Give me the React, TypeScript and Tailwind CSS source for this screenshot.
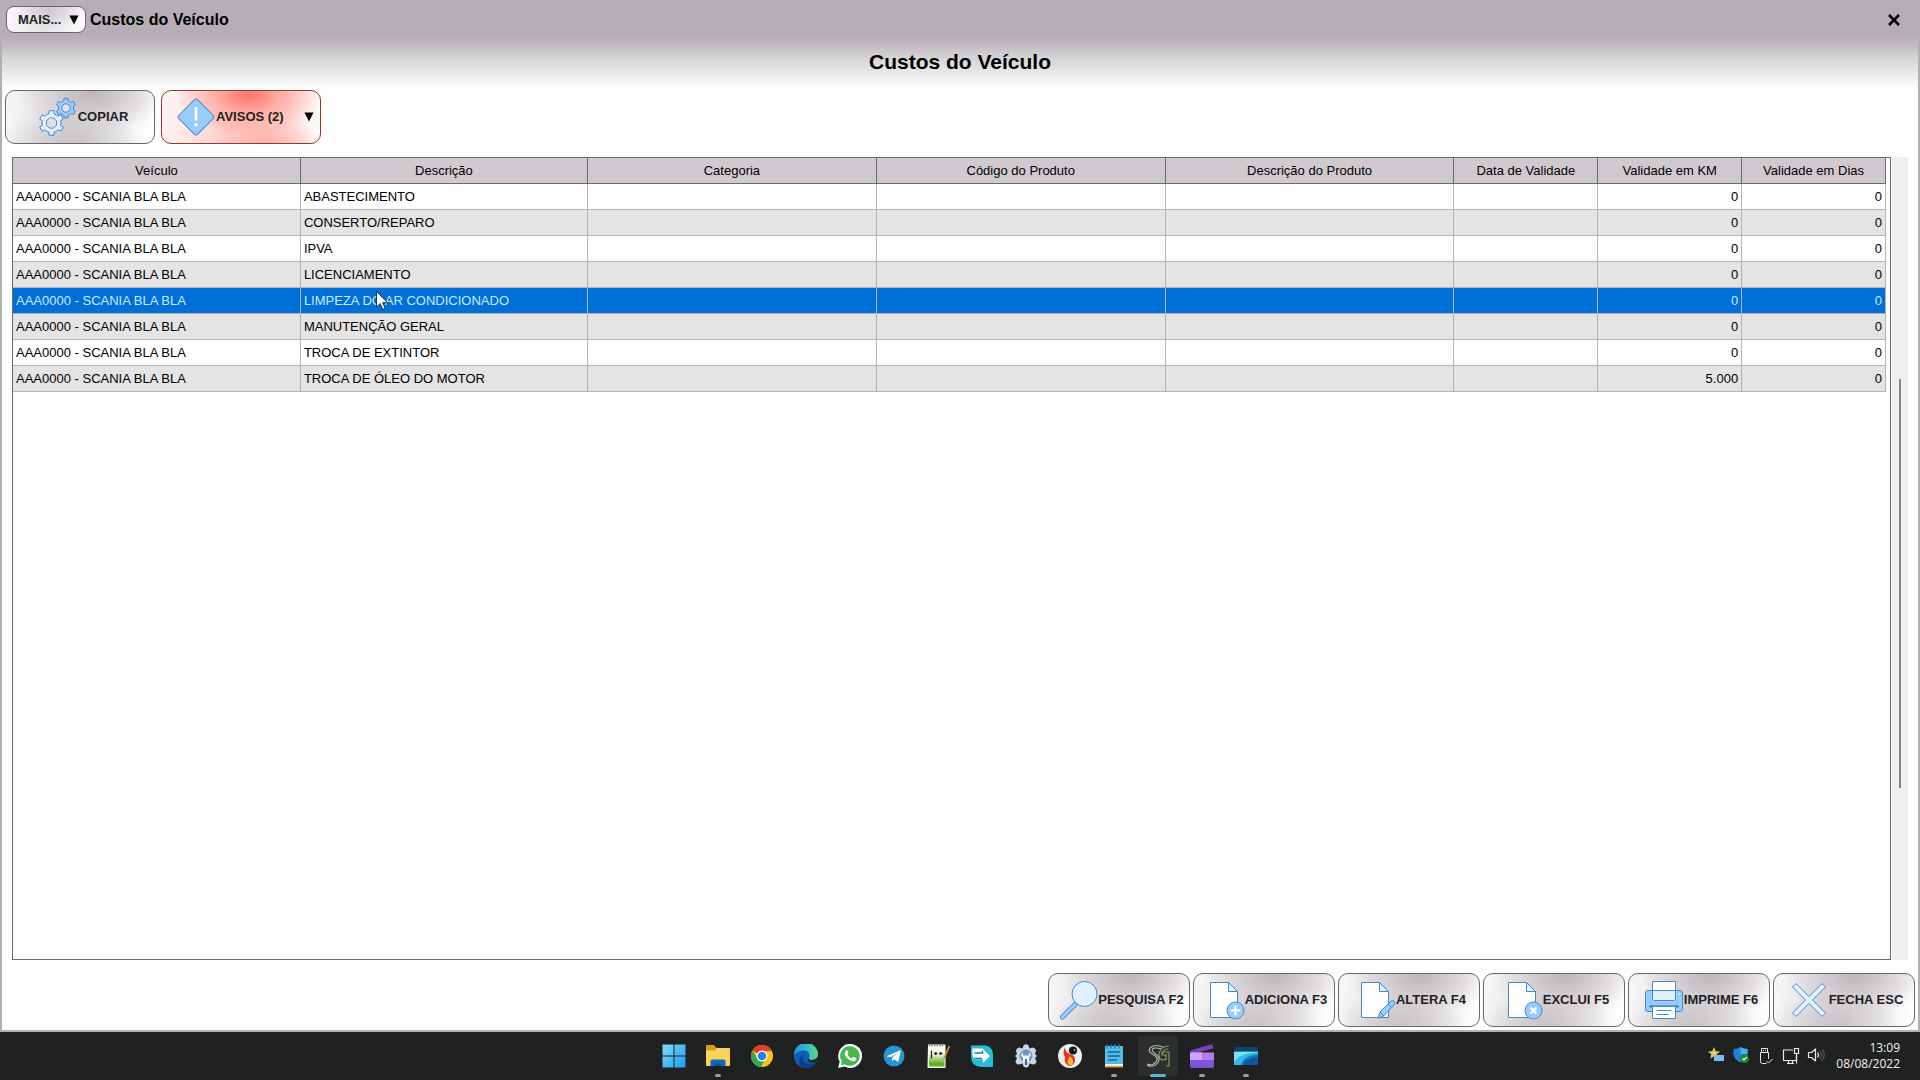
import { useState } from 'react';
import type { ReactNode } from 'react';

const columns = [
  { label: 'Veículo', width: 'w-[15.37%]' },
  { label: 'Descrição', width: 'w-[15.33%]' },
  { label: 'Categoria', width: 'w-[15.42%]' },
  { label: 'Código do Produto', width: 'w-[15.42%]' },
  { label: 'Descrição do Produto', width: 'w-[15.42%]' },
  { label: 'Data de Validade', width: 'w-[7.68%]' },
  { label: 'Validade em KM', width: 'w-[7.68%]' },
  { label: 'Validade em Dias', width: 'w-[7.68%]' },
];

const veiculo = 'AAA0000 - SCANIA BLA BLA';

const rows = [
  { descricao: 'ABASTECIMENTO', km: '0', dias: '0' },
  { descricao: 'CONSERTO/REPARO', km: '0', dias: '0' },
  { descricao: 'IPVA', km: '0', dias: '0' },
  { descricao: 'LICENCIAMENTO', km: '0', dias: '0' },
  { descricao: 'LIMPEZA DO AR CONDICIONADO', km: '0', dias: '0' },
  { descricao: 'MANUTENÇÃO GERAL', km: '0', dias: '0' },
  { descricao: 'TROCA DE EXTINTOR', km: '0', dias: '0' },
  { descricao: 'TROCA DE ÓLEO DO MOTOR', km: '5.000', dias: '0' },
];

const line = '#4788c7';

function Gear({ cx, cy, r, fill }: { cx: number; cy: number; r: number; fill: string }) {
  // six flat teeth around a ring
  const pts: string[] = [];
  for (let i = 0; i < 6; i++) {
    const a = (i * 60 * Math.PI) / 180;
    const at = (radius: number, off: number) =>
      `${(cx + radius * Math.sin(a + off)).toFixed(2)},${(cy - radius * Math.cos(a + off)).toFixed(2)}`;
    pts.push(at(r * 0.76, -0.27), at(r, -0.2), at(r, 0.2), at(r * 0.76, 0.27), at(r * 0.76, 0.52));
  }
  return (
    <>
      <polygon points={pts.join(' ')} fill={fill} stroke={line} strokeLinejoin="round" />
      <circle cx={cx} cy={cy} r={r * 0.42} fill="#e4e1e4" stroke={line} />
    </>
  );
}

function Svg({ children }: { children: ReactNode }) {
  return (
    <svg viewBox="0 0 40 40" className="size-10 shrink-0" fill="none" aria-hidden="true">
      {children}
    </svg>
  );
}

const GearsIcon = () => (
  <Svg>
    <Gear cx={28} cy={11} r={10} fill="#98ccfd" />
    <Gear cx={13.5} cy={26} r={12.5} fill="#dff0fe" />
  </Svg>
);

const WarningIcon = () => (
  <Svg>
    <rect x="6.7" y="6.7" width="26.6" height="26.6" rx="2.5" transform="rotate(45 20 20)" fill="#98ccfd" stroke={line} />
    <path d="M20 10v13.5" stroke="#fff" strokeWidth="2.6" />
    <circle cx="20" cy="27.8" r="1.8" fill="#fff" />
  </Svg>
);

const SearchIcon = () => (
  <Svg>
    <path d="M17 24.5 4.5 37" stroke={line} strokeWidth="5" strokeLinecap="round" />
    <path d="M17 24.5 4.5 37" stroke="#98ccfd" strokeWidth="3.2" strokeLinecap="round" />
    <circle cx="26.5" cy="14" r="12.5" fill="#dff0fe" stroke={line} />
  </Svg>
);

const Page = () => (
  <>
    <path d="M5.500 2.500h18l9 9v26h-27z" fill="#fff" stroke={line} />
    <path d="M23.500 2.500v9h9z" fill="#dff0fe" stroke={line} />
  </>
);

const AddIcon = () => (
  <Svg>
    <Page />
    <circle cx="30.500" cy="30.500" r="8.500" fill="#98ccfd" stroke={line} />
    <path d="M30.500 25.500v10M25.500 30.500h10" stroke="#fff" strokeWidth="2" />
  </Svg>
);

const EditIcon = () => (
  <Svg>
    <Page />
    <path d="m22 38.500 2-6.500 10.500-10.500q2-1.500 3.500 0t0 3.500L27.500 36z" fill="#98ccfd" stroke={line} strokeLinejoin="round" />
    <path d="m24 32 3.500 4M32 24l3.500 3.500" stroke={line} />
  </Svg>
);

const DeleteIcon = () => (
  <Svg>
    <Page />
    <circle cx="30.500" cy="30.500" r="8.500" fill="#98ccfd" stroke={line} />
    <path d="m27.500 27.500 6 6m0-6-6 6" stroke="#fff" strokeWidth="2.200" />
  </Svg>
);

const PrintIcon = () => (
  <Svg>
    <path d="M4 10.500h32q2.500 0 2.500 2.500v16q0 2.500-2.500 2.500H4q-2.500 0-2.500-2.500V13q0-2.500 2.500-2.500z" fill="#98ccfd" stroke={line} />
    <path d="M8.500 1.500h23v17q0 2-2 2h-19q-2 0-2-2z" fill="#fff" stroke={line} />
    <path d="M9 10.500h22v8q0 1.500-1.500 1.500h-19Q9 20 9 18.500z" fill="#dff0fe" />
    <path d="M8.500 10.500h23" stroke={line} />
    <path d="M6.500 26.500h27" stroke={line} strokeWidth="2.500" strokeLinecap="round" />
    <path d="M8.500 26.500h23v12h-23z" fill="#fff" stroke={line} />
    <path d="M12.500 30.500h15M12.500 34.500h12" stroke={line} />
    <path d="M35 14h1" stroke="#fff" strokeWidth="1.500" />
  </Svg>
);

const CloseIcon = () => (
  <Svg>
    <path
      d="m7 3.500 13 13 13-13 3.500 3.500-13 13 13 13-3.500 3.500-13-13-13 13L3.500 33l13-13-13-13z"
      fill="#dff0fe"
      stroke={line}
      strokeLinejoin="round"
    />
  </Svg>
);

const silver =
  'border-[#6a6568] bg-[radial-gradient(ellipse_50%_80%_at_58%_4%,#beb6bb_0%,#d0cacebb_50%,transparent_100%),radial-gradient(ellipse_45%_65%_at_45%_96%,#c9c5c8_0%,transparent_100%),linear-gradient(100deg,#f6f5f6_5%,#d9d6d8_45%,#eeecee_75%,#fdfdfd_95%)]';
const red =
  'border-[#93392c] bg-[radial-gradient(ellipse_45%_80%_at_55%_8%,#ff7468_0%,#ff9f96bb_45%,transparent_100%),radial-gradient(ellipse_35%_60%_at_65%_100%,#ffb0a8_0%,transparent_100%),linear-gradient(100deg,#fdf3f2_5%,#ffd0cb_45%,#fbdfdc_75%,#fdf9f9_95%)]';

const actions = [
  { label: 'PESQUISA F2', icon: <SearchIcon /> },
  { label: 'ADICIONA F3', icon: <AddIcon /> },
  { label: 'ALTERA F4', icon: <EditIcon /> },
  { label: 'EXCLUI F5', icon: <DeleteIcon /> },
  { label: 'IMPRIME F6', icon: <PrintIcon /> },
  { label: 'FECHA ESC', icon: <CloseIcon /> },
];

function Triangle() {
  return (
    <svg viewBox="0 0 10 10" className="size-[10px] shrink-0" aria-hidden="true">
      <path d="M.5.500h9L5 9.500z" fill="#000" />
    </svg>
  );
}

const taskbarApps: { name: string; open?: boolean; active?: boolean; art: ReactNode }[] = [
  {
    name: 'Iniciar',
    art: (
      <>
        <defs>
          <linearGradient id="win" x1="0" y1="0" x2="1" y2="1">
            <stop offset="0" stopColor="#7fdcfc" />
            <stop offset="1" stopColor="#1a9af0" />
          </linearGradient>
        </defs>
        <path d="M.5.500h11v11H.5zM12.500.500h11v11h-11zM.5 12.500h11v11H.5zM12.500 12.500h11v11h-11z" fill="url(#win)" />
      </>
    ),
  },
  {
    name: 'Explorador de Arquivos',
    open: true,
    art: (
      <>
        <path d="M0 2q0-1 1-1h7l2.500 3H23q1 0 1 1v5H0z" fill="#d99a1c" />
        <path d="M0 6.500h8.500L11 4h12q1 0 1 1v16q0 1-1 1H1q-1 0-1-1z" fill="#fcd35a" />
        <path d="M4.500 22v-5q0-1.500 1.500-1.500h12q1.500 0 1.500 1.500v5z" fill="#1668b8" />
        <path d="M9 22v-2.500h6V22z" fill="#0f4d92" />
      </>
    ),
  },
  {
    name: 'Google Chrome',
    art: (
      <>
        <circle cx="12" cy="12" r="11" fill="#fbc116" />
        <path d="M12 12 2.500 6.500a11 11 0 0 1 19 0L21.800 7H12z" fill="#e33b2e" />
        <path d="M2.500 6.500a11 11 0 0 0 8.500 16.500l4.500-8.500L12 12 7.500 14.500z" fill="#2da94f" />
        <circle cx="12" cy="12" r="5.500" fill="#fff" />
        <circle cx="12" cy="12" r="4.300" fill="#2f7cf0" />
      </>
    ),
  },
  {
    name: 'Microsoft Edge',
    art: (
      <>
        <defs>
          <linearGradient id="edge" x1="0" y1="0" x2="1" y2="0">
            <stop offset="0" stopColor="#1d8fe0" />
            <stop offset=".6" stopColor="#37c0c8" />
            <stop offset="1" stopColor="#5cd96a" />
          </linearGradient>
        </defs>
        <circle cx="12" cy="12" r="12" fill="#0f5fb5" />
        <path d="M0 11.500A12 12 0 0 1 24 10c0 4-3 6-6.500 6-2 0-3.500-1-2.500-2.500 2-4-1-7-5-7C5 6.500 1.500 9 0 11.500z" fill="url(#edge)" />
        <path d="M8.500 13c0 6 6 9 13.500 5-3 6-10 7.500-14.500 4.500-4-4-3-11 3-12-1.500 1-2 1.500-2 2.500z" fill="#0b3f8c" />
        <path d="M15 13.500c-.5 1.500.5 2.500 2.500 2.500 3 0 5.500-1.500 6.500-4 0 3-1 5-2 6-5 2-11-1-7-4.500z" fill="#202322" />
      </>
    ),
  },
  {
    name: 'WhatsApp',
    art: (
      <>
        <path d="M0 24l1.700-6.200A12 12 0 1 1 6.500 22.500z" fill="#fff" />
        <path d="M2.800 21.200l1-3.800a9.800 9.800 0 1 1 3.200 3z" fill="#45b854" />
        <path
          d="M8 6.500c.5-.4 1.300-.4 1.600.2l.9 2.100c.1.500-.8 1.400-1 1.700.8 1.900 2.400 3.300 4.300 4l1.300-1.500c.3-.2.6-.1.900 0l2 1c.6.300.2 1.900-.6 2.500-1.300 1-3.300.8-5.300-.2-2.800-1.400-4.800-3.900-5.200-5.700-.3-1.500.1-3 1.100-4.100z"
          fill="#fff"
        />
      </>
    ),
  },
  {
    name: 'Telegram',
    art: (
      <>
        <circle cx="12" cy="12" r="10.500" fill="#2795cf" />
        <path d="M5 12 18 6.500q1-.3.800.8L16.500 17q-.3 1-1.200.5l-3.100-2.300-1.700 1.700-.5.100.2-3.200 5.500-5-6.500 4.300L5.200 12.700z" fill="#fff" />
      </>
    ),
  },
  {
    name: 'Notepad++',
    art: (
      <>
        <defs>
          <linearGradient id="npp" x1="0" y1="0" x2="0" y2="1">
            <stop offset=".35" stopColor="#f7f7ea" />
            <stop offset=".85" stopColor="#62b01e" />
          </linearGradient>
        </defs>
        <path d="M2 .5h17.500V24H1.500z" fill="#f7f7ea" />
        <path d="M3 3h15.500v19.500H3z" fill="url(#npp)" />
        <path d="M3 1.500h15" stroke="#888" strokeWidth="1.500" strokeDasharray="1.500 1" />
        <path d="M5.500 6.500v8M8 9.500h3.500M13 9.500h3.500M9.700 8v3M14.700 8v3" stroke="#26331a" strokeWidth="1.300" />
        <path d="m22.500 1.500-5 12-.5 2.500 2-1.500 5-12z" fill="#c68d42" />
      </>
    ),
  },
  {
    name: 'Acesso remoto',
    art: (
      <>
        <path d="M1 1.500h15q7 2 7 9v11.500q0 1-1 1H11Q1 22 1 13z" fill="#28bcd8" />
        <path d="M2.500 4.500h10l7.500 7.500-7 7v-3.500H5q-2.500-2-2.500-5z" fill="#fff" />
        <path d="M4.500 9h8V6.500M4.500 14.500H12" stroke="#167e9b" strokeWidth="1.500" fill="none" />
      </>
    ),
  },
  {
    name: 'Configurador',
    art: (
      <>
        <path
          d="M9.500 1.500Q12-1 14.500 1.500l1 3 3-1q3.500.5 3.500 3.500l-1 3 2 2-2 2 1.500 3.500q-.5 3-3.500 3l-3.500-1-1 3q-2.500 2-5 0l-1-3-3.500 1q-3 0-3.500-3L3 14l-2-2 2-2-1-3q0-3 3.500-3.500l3 1z"
          fill="#cbd6ea"
        />
        <circle cx="12" cy="12" r="6.500" fill="#7d93bd" />
        <path d="M9 18v-4l-2-3 2-3v3.500h6V8l2 3-2 3v4z" fill="#f2f6fb" />
        <path d="M11 15h2v6h-2z" fill="#46618f" />
      </>
    ),
  },
  {
    name: 'Firebird',
    art: (
      <>
        <circle cx="12" cy="12" r="12" fill="#eceff1" />
        <path d="M7 3c-2 4-2 7 0 10-1 3 0 8 5 9 5-1 6-6 4-10l-4-2c-3-1-5-3-5-7z" fill="#e33522" />
        <path d="M12 12c-3 4-3 7-1 9h3c2-3 1-6-2-9z" fill="#ffb42b" />
        <circle cx="15" cy="6.500" r="4" fill="#151515" />
        <circle cx="16.500" cy="6" r=".8" fill="#fff" />
      </>
    ),
  },
  {
    name: 'Bloco de Notas',
    open: true,
    art: (
      <>
        <path d="M3 2h18v21H3z" fill="#52bde6" />
        <path d="M3 20h18v2.500H3z" fill="#f0f0e8" />
        <path d="M3 22h18v1.500H3z" fill="#dda035" />
        <path d="M5 .5v4M9 .5v4M13 .5v4M17 .5v4" stroke="#1a86b8" strokeWidth="1.500" />
        <path d="M6 8h12M6 12h12M6 16h9" stroke="#14658f" strokeWidth="1.500" />
      </>
    ),
  },
  {
    name: 'Sistema Gerencial',
    active: true,
    art: (
      <g fill="none" strokeWidth="1.100">
        <path d="M17 3C8-1 1 4 4 8c2 3 8 3 7 8-1 4-6 6-10 4M15 5C9 3 5 4 6.500 7c2 3 7 4 6.500 9-1 5-7 8-12 5" stroke="#b6b9b5" />
        <path d="M23 2c-7 0-10 5-10 9 0 5 4 6 7 4v-4h-4V8h7v14h-3M22 5c-4 0-6 3-6 6" stroke="#84a854" />
      </g>
    ),
  },
  {
    name: 'Editor de Vídeo',
    open: true,
    art: (
      <>
        <path d="M.5 6.500 22 0l1.500 4.500L2 10z" fill="#7541bd" />
        <path d="M0 8.500h24V22q0 1.500-1.500 1.500h-21Q0 23.500 0 22z" fill="#b57cf0" />
        <path d="M0 16h24v6q0 1.500-1.500 1.500h-21Q0 23.500 0 22z" fill="#7c55dd" />
        <path d="M0 8.500h12V16H0z" fill="#d3a2fa" />
      </>
    ),
  },
  {
    name: 'Área de Trabalho Remota',
    open: true,
    art: (
      <>
        <path d="M0 3h24v18H0z" fill="#1778bd" />
        <path d="M0 7.500h24v3Q10 11 7 21H0z" fill="#37b8e8" />
        <path d="M0 7.500h24v1Q5 9 0 18z" fill="#7fe0f0" />
        <path d="M9 21q3-7 15-8v8z" fill="#0f569a" />
        <path d="M0 3h24v4.500H0z" fill="#0c426e" />
      </>
    ),
  },
];

function TrayIcons() {
  return (
    <div className="flex">
      <span className="flex w-[25px] justify-center">
        <svg viewBox="0 0 16 16" className="size-4">
          <path d="m6 0 1.700 4.200 4.300.3-3.300 2.800 1 4.200L6 9.200l-3.700 2.300 1-4.200L0 4.500l4.300-.3z" fill="#edc95b" />
          <path d="M6 8h10v6H6z" fill="#78bdf2" />
        </svg>
      </span>
      <span className="flex w-[25px] justify-center">
        <svg viewBox="0 0 16 16" className="size-4">
          <path d="M7.500 0Q10 2 14.500 2v5q0 5-7 8.500Q.5 12 .5 7V2Q5 2 7.500 0z" fill="#1c83d6" />
          <path d="M7.500 0Q10 2 14.500 2v5h-7z" fill="#45aef0" />
          <circle cx="11.500" cy="11.500" r="4.500" fill="#16893c" />
          <path d="m9.500 11.500 1.500 1.500 2.700-2.800" stroke="#fff" strokeWidth="1.200" fill="none" />
        </svg>
      </span>
      <span className="flex w-[25px] justify-center">
        <svg viewBox="0 0 16 18" className="h-[18px] w-4" fill="none" stroke="#e8e8e8" strokeWidth="1">
          <path d="M3.500 5.500v-4h6v4M5.500 3v1M7.500 3v1M10.500 12V5.500h-8v9q0 2 2 2h4" />
          <path d="m8.500 14 2 2 4-4" />
        </svg>
      </span>
      <span className="flex w-[25px] justify-center">
        <svg viewBox="0 0 18 18" className="size-[18px]" fill="none" stroke="#e8e8e8" strokeWidth="1.200">
          <path d="M11 3H1.500v10.500h13V9M5 16.500h7M6.500 13.500v3M10.500 13.500v3" />
          <path d="M12.500 1.500h4v5h-4zM14.500 6.500v10" />
        </svg>
      </span>
      <span className="flex w-[25px] justify-center">
        <svg viewBox="0 0 18 16" className="h-4 w-[18px]" fill="none" stroke="#e8e8e8" strokeWidth="1.200">
          <path d="M1.500 5.500h3l4-3.500v12l-4-3.500h-3z" strokeLinejoin="round" />
          <path d="M10.500 5.500q2 2.500 0 5" />
          <path d="M12.800 3.500q3.500 4.500 0 9M15 2q4.500 6 0 12" stroke="#555" />
        </svg>
      </span>
    </div>
  );
}

export default function App() {
  const [selected, setSelected] = useState(4);

  return (
    <div className="flex min-h-screen flex-col bg-[#202020] font-['Liberation_Sans',Arial,sans-serif] text-[13px] text-black">
      <div className="flex flex-1 flex-col border-b-2 border-[#b3b0b2] bg-[#fdfdfd]">
        <header className="flex h-9 items-center bg-[#b6aeb6] pt-[3px] pr-[18px] pl-[6px]">
          <button
            type="button"
            className="flex h-[27px] w-20 items-center justify-between rounded-lg border border-[#6a6568] bg-[radial-gradient(ellipse_45%_80%_at_55%_10%,#cfcacd_0%,transparent_100%),linear-gradient(100deg,#fafafa,#e6e4e6_50%,#fdfdfd)] pr-[6px] pl-[11px] font-bold text-[#222]"
          >
            MAIS...
            <Triangle />
          </button>
          <h1 className="ml-1 flex-1 text-base font-bold">Custos do Veículo</h1>
          <button type="button" aria-label="Fechar" className="flex size-4 items-center justify-center">
            <svg viewBox="0 0 12 12" className="size-3" aria-hidden="true">
              <path d="m1 1 10 10m0-10L1 11" stroke="#000" strokeWidth="2.600" />
            </svg>
          </button>
        </header>

        <main className="flex flex-1 flex-col border-x-2 border-[#b3b0b2]">
          <div className="flex h-[51px] items-center justify-center bg-[linear-gradient(#b8aeb5_0%,#c4b9c0_18%,#cfcdd0_35%,#e0e0e1_60%,#fdfdfd_100%)]">
            <h2 className="text-[21px] leading-6 font-bold">Custos do Veículo</h2>
          </div>

          <div className="flex gap-[6px] px-[3px] pt-[3px] pb-[13px]">
            <button
              type="button"
              className={`flex h-[54px] w-[150px] items-center justify-center rounded-[10px] border pl-[6px] font-bold text-[#222] ${silver}`}
            >
              <GearsIcon />
              COPIAR
            </button>
            <button
              type="button"
              className={`flex h-[54px] w-40 items-center rounded-[10px] border pr-[6px] pl-[14px] font-bold text-[#222] ${red}`}
            >
              <WarningIcon />
              <span className="flex-1 text-left">AVISOS (2)</span>
              <Triangle />
            </button>
          </div>

          <div className="flex flex-1 pr-[10px] pl-[10px]">
            <div className="flex-1 border border-[#6b6b6b] pr-1">
              <table className="w-full table-fixed border-separate border-spacing-0">
                <thead>
                  <tr>
                    {columns.map((col) => (
                      <th
                        key={col.label}
                        className={`h-[26px] border-r border-b border-[#6b6b6b] bg-[#d0cad0] p-0 font-normal ${col.width}`}
                      >
                        {col.label}
                      </th>
                    ))}
                  </tr>
                </thead>
                <tbody>
                  {rows.map((row, i) => {
                    const tone =
                      i === selected
                        ? 'bg-[#0070d8] text-[#c4ecff]'
                        : i % 2
                          ? 'bg-[#e4e4e4]'
                          : 'bg-[#fdfdfd]';
                    return (
                      <tr
                        key={row.descricao}
                        onClick={() => setSelected(i)}
                        className={`${tone} [&>td]:h-[26px] [&>td]:border-r [&>td]:border-b [&>td]:border-[#b4b4b4] [&>td]:px-[3px] [&>td]:pt-px [&>td]:pb-0`}
                      >
                        <td>{veiculo}</td>
                        <td className="relative">
                          {row.descricao}
                          {i === 4 && (
                            <svg viewBox="0 0 12 20" className="absolute top-[3px] left-[75px] h-5 w-3" aria-hidden="true">
                              <path
                                d="M.5.500v15.500l3.700-3.500 2.600 6 2.400-1-2.600-5.800h5z"
                                fill="#fff"
                                stroke="#111"
                                strokeWidth=".8"
                              />
                            </svg>
                          )}
                        </td>
                        <td />
                        <td />
                        <td />
                        <td />
                        <td className="text-right">{row.km}</td>
                        <td className="text-right">{row.dias}</td>
                      </tr>
                    );
                  })}
                </tbody>
              </table>
            </div>
            <div className="ml-px flex w-4 flex-col items-center bg-[#efefef]">
              <div className="flex-[222]" />
              <div className="w-[2px] flex-[410] bg-[#858585]" />
              <div className="flex-[172]" />
            </div>
          </div>

          <footer className="flex justify-end gap-[3px] pt-[13px] pr-[3px] pb-[3px]">
            {actions.map((action) => (
              <button
                key={action.label}
                type="button"
                className={`flex h-[54px] w-[142px] items-center justify-center rounded-[10px] border pl-1 font-bold whitespace-nowrap text-[#222] ${silver}`}
              >
                {action.icon}
                {action.label}
              </button>
            ))}
          </footer>
        </main>
      </div>

      <nav className="grid h-12 grid-cols-[1fr_auto_1fr] items-center bg-[#202221]">
        <span />
        <div className="flex">
          {taskbarApps.map((app) => (
            <button
              key={app.name}
              type="button"
              aria-label={app.name}
              className="relative flex h-12 w-11 items-center justify-center"
            >
              {app.active && <span className="absolute inset-x-[2px] inset-y-1 rounded bg-[#2d2f2e]" />}
              <svg viewBox="0 0 24 24" className="relative size-6" aria-hidden="true">
                {app.art}
              </svg>
              {app.open && <span className="absolute bottom-[3px] h-[3px] w-[6px] rounded-full bg-[#9a9a9a]" />}
              {app.active && <span className="absolute bottom-[3px] h-[3px] w-4 rounded-full bg-[#57b4e0]" />}
            </button>
          ))}
        </div>
        <div className="flex items-center justify-end gap-2 pr-5">
          <TrayIcons />
          <div className="text-right font-['Open_Sans','Noto_Sans',sans-serif] text-xs leading-4 text-[#f0f0f0]">
            <div>13:09</div>
            <div>08/08/2022</div>
          </div>
        </div>
      </nav>
    </div>
  );
}
